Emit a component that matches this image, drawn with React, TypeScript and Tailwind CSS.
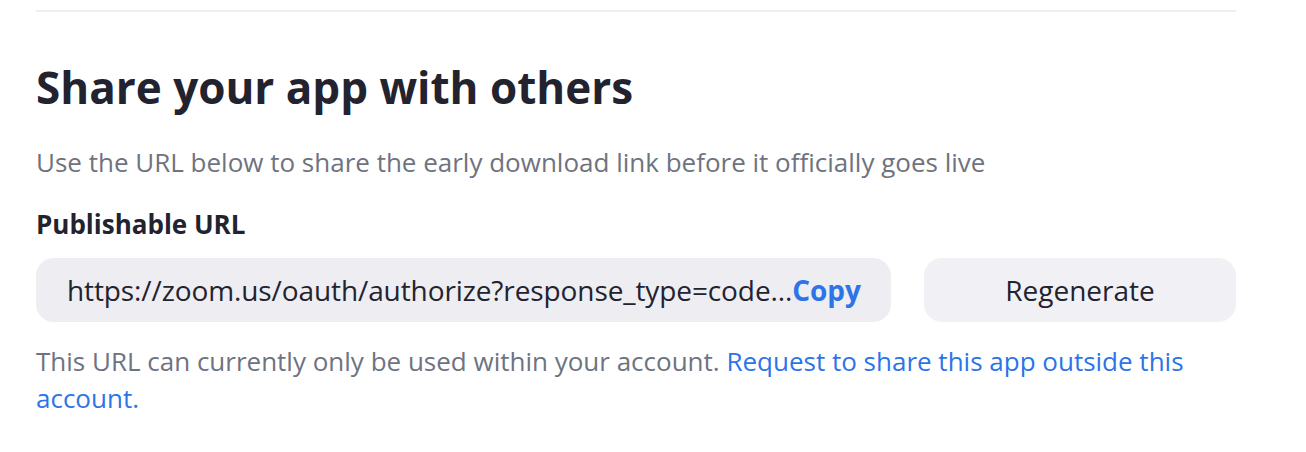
import React from "react";

export default function App() {
  return (
    <div className="w-[1306px] h-[452px] bg-white" style={{ fontFamily: '"Open Sans", "Noto Sans", sans-serif' }}>
      <div className="px-[36px] w-[1272px]">
        <div className="pt-[10px] w-[1200px]">
          <div className="h-[2px] bg-[#ededf2]" />
        </div>
        <h2 className="mt-[45px] text-[44px] leading-[60px] font-bold text-[#23232f]">Share your app with others</h2>
        <p className="mt-[27px] text-[26px] leading-[36px] text-[#6e7380]">
          Use the URL below to share the early download link before it officially goes live
        </p>
        <div className="mt-[26px] text-[26px] leading-[36px] font-bold text-[#23232f]">Publishable URL</div>
        <div className="mt-[16px] flex gap-[33px] w-[1200px]">
          <div className="w-[855px] h-[64px] rounded-[18px] bg-[#ededf2] flex items-center pl-[31px] text-[28px] tracking-[-0.1px] text-[#23232f] whitespace-nowrap">
            <span>https://zoom.us/oauth/authorize?response_type=code...</span>
            <span className="font-bold text-[#2d74e8]">Copy</span>
          </div>
          <button className="flex-1 h-[64px] rounded-[18px] bg-[#f1f1f5] text-[28px] text-[#23232f]">Regenerate</button>
        </div>
        <p className="mt-[21px] w-[1200px] text-[26px] leading-[37px] text-[#6e7380]">
          This URL can currently only be used within your account.{" "}
          <a className="text-[#2d74e8]">Request to share this app outside this account.</a>
        </p>
      </div>
    </div>
  );
}
